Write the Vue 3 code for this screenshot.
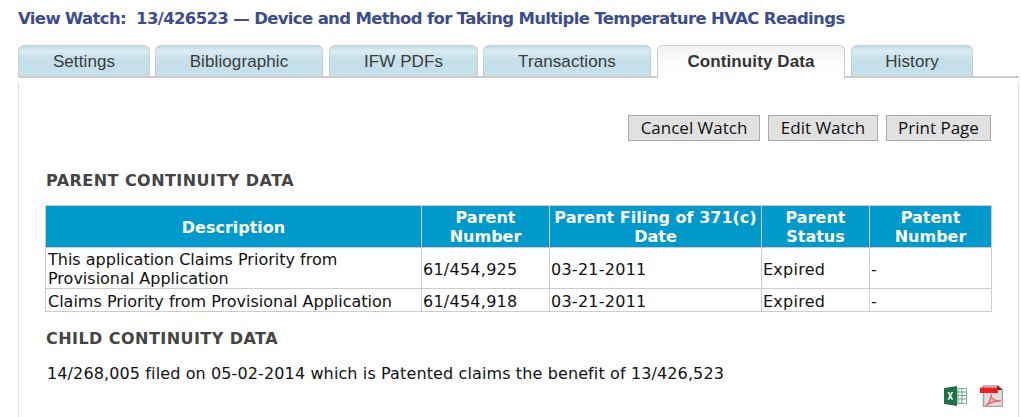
<template>
  <div class="page">
    <h1 class="title">View Watch:&nbsp; 13/426523 — Device and Method for Taking Multiple Temperature HVAC Readings</h1>
    <nav class="tabs">
      <div
        v-for="t in tabs"
        :key="t.label"
        class="tab"
        :class="{ active: t.active }"
        :style="{ width: t.w + 'px', marginLeft: t.gap + 'px' }"
      >{{ t.label }}</div>
    </nav>
    <section class="panel">
      <div class="actions">
        <button class="btn cancel">Cancel Watch</button>
        <button class="btn edit">Edit Watch</button>
        <button class="btn print">Print Page</button>
      </div>
      <h2 class="heading parent">PARENT CONTINUITY DATA</h2>
      <table class="data">
        <colgroup>
          <col style="width:376px" /><col style="width:128px" /><col style="width:212px" /><col style="width:108px" /><col style="width:122px" />
        </colgroup>
        <thead>
          <tr>
            <th>Description</th>
            <th>Parent Number</th>
            <th>Parent Filing of 371(c) Date</th>
            <th>Parent Status</th>
            <th>Patent Number</th>
          </tr>
        </thead>
        <tbody>
          <tr v-for="r in rows" :key="r[1]">
            <td v-for="(c, i) in r" :key="i">{{ c }}</td>
          </tr>
        </tbody>
      </table>
      <h2 class="heading child">CHILD CONTINUITY DATA</h2>
      <p class="child-text">14/268,005 filed on 05-02-2014 which is Patented claims the benefit of 13/426,523</p>
      <div class="exports">
        <svg class="xls" width="23" height="20" viewBox="0 0 23 20" aria-label="Excel">
          <path d="M10 2.500h12.500v15H10z" fill="#fff" stroke="#7fae95" />
          <path d="M14 3v14M18 3v14M10 6h12M10 9.500h12M10 13h12" stroke="#6ea487" fill="none" />
          <path d="M0 2 13 0v20L0 18z" fill="#1f7246" />
          <path d="M3.500 6h1.800l1 2.200L7.400 6h1.700L7.200 9.800l2 4H7.500L6.300 11.400 5.100 13.800H3.500l2-4z" fill="#fff" />
        </svg>
        <svg width="23" height="22" viewBox="0 0 23 22" aria-label="PDF">
          <path d="M3.500 1h15l4 4v16.500h-19z" fill="#e2dede" stroke="#a3a3a3" stroke-width="1.500" />
          <path d="M17 .500l5.500 4.500h-5.500z" fill="#4a2c2c" />
          <path d="M0 2.500h18v5.500H0z" fill="#ed1c24" />
          <path d="M6 21c3-3 5-7 5.500-12M11.500 12c1.500 3 3 4 9.500 4M6.500 20c4-2.500 8-4 14-4" fill="none" stroke="#f0656b" stroke-width="1.500" />
        </svg>
      </div>
    </section>
  </div>
</template>

<script setup>
const tabs = [
  { label: 'Settings', w: 132, gap: 0 },
  { label: 'Bibliographic', w: 168, gap: 5 },
  { label: 'IFW PDFs', w: 149, gap: 6 },
  { label: 'Transactions', w: 168, gap: 5 },
  { label: 'Continuity Data', w: 188, gap: 6, active: true },
  { label: 'History', w: 122, gap: 6 }
]
const rows = [
  ['This application Claims Priority from Provisional Application', '61/454,925', '03-21-2011', 'Expired', '-'],
  ['Claims Priority from Provisional Application', '61/454,918', '03-21-2011', 'Expired', '-']
]
</script>

<style>
html, body { margin: 0; background: #fff; overflow: hidden; }
</style>

<style scoped>
.page {
  width: 1021px;
  height: 417px;
  overflow: hidden;
  box-sizing: border-box;
  padding: 8px 2px 0 18px;
  font-family: "DejaVu Sans", sans-serif;
}
.title {
  margin: 0;
  height: 37px;
  line-height: 21px;
  font-size: 16.500px;
  font-weight: 700;
  color: #3c4c8c;
  letter-spacing: -0.650px;
  white-space: nowrap;
}
.tabs {
  display: flex;
  height: 31px;
  border-bottom: 2px solid #ccc;
  margin-bottom: 4px;
}
.tab {
  box-sizing: border-box;
  height: 31px;
  border: 1px solid #ccc;
  border-bottom: 0;
  border-radius: 6px 6px 0 0;
  background: linear-gradient(#bfdce7, #dcecf2 5px, #c5e0ea 13px);
  font: 17px/32px "Liberation Sans", sans-serif;
  letter-spacing: 0.100px;
  color: #3b3b3b;
  text-align: center;
}
.tab.active {
  height: 33px;
  background: linear-gradient(#f2f2f2, #fff 70%);
  font-weight: 700;
  color: #333;
  position: relative;
}
.panel {
  position: relative;
  height: 340px;
  border-left: 1px solid #ddd;
  border-right: 1px solid #ddd;
  box-sizing: border-box;
}
.actions {
  display: flex;
  justify-content: flex-end;
  gap: 8px;
  padding: 33px 27px 0 0;
}
.btn {
  height: 26px;
  padding: 0;
  border: 1px solid #aaa;
  background: #e1e1e1;
  font: 17px/24px "Open Sans", sans-serif;
  color: #111;
}
.cancel { width: 132px; }
.edit { width: 110px; }
.print { width: 105px; }
.heading {
  margin: 0;
  font-size: 16px;
  line-height: 18px;
  font-weight: 700;
  color: #444;
  letter-spacing: 0.450px;
}
.parent { margin: 31px 0 0 27px; }
.child { margin: 18px 0 0 27px; }
.data {
  border-collapse: collapse;
  table-layout: fixed;
  width: 946px;
  margin: 15px 0 0 26px;
  font-size: 16px;
  color: #111;
}
.data th {
  box-sizing: border-box;
  background: #0099cc;
  color: #fff;
  border: 1px solid #ccc;
  padding: 0 2px;
  height: 42px;
  font-size: 16px;
  line-height: 19px;
  font-weight: 700;
}
.data th:first-child { padding-top: 2px; }
.data td {
  border: 1px solid #ccc;
  padding: 2px 2px 0;
  line-height: 19px;
  vertical-align: middle;
}
.data td:not(:first-child) { padding-left: 1px; letter-spacing: 0.250px; }
.data tr:last-child td { height: 23px; box-sizing: border-box; }
.child-text {
  margin: 16px 0 0 28px;
  font-size: 16px;
  line-height: 19px;
  letter-spacing: 0.120px;
  color: #111;
}
.exports {
  position: absolute;
  right: 15px;
  top: 303px;
  display: flex;
  gap: 13px;
}
.xls { margin-top: 1px; }
</style>
